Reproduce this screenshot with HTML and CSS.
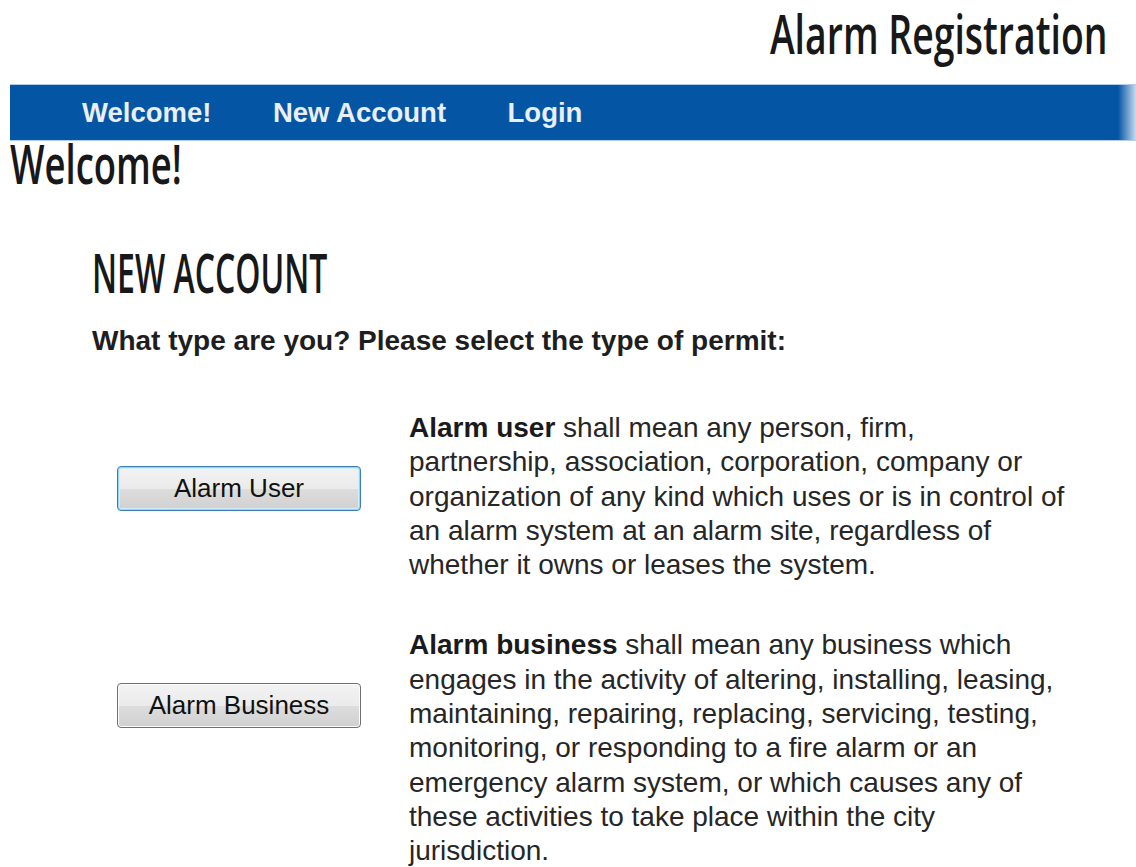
FILE: index.html
```html
<!DOCTYPE html>
<html lang="en">
<head>
<meta charset="utf-8">
<title>Alarm Registration</title>
<link rel="stylesheet" href="styles.css">
</head>
<body>
<div class="page">
  <header class="masthead">
    <div class="site-title"><span>Alarm Registration</span></div>
  </header>

  <nav class="mainnav">
    <a href="#" class="mainnav-link">Welcome!</a>
    <a href="#" class="mainnav-link">New Account</a>
    <a href="#" class="mainnav-link">Login</a>
  </nav>

  <h1 class="page-title"><span>Welcome!</span></h1>

  <section class="account">
    <h2 class="section-title"><span>NEW ACCOUNT</span></h2>
    <p class="prompt">What type are you? Please select the type of permit:</p>

    <div class="permit-row permit-row-user">
      <div class="permit-action">
        <button type="button" class="permit-btn is-focused">Alarm User</button>
      </div>
      <p class="permit-desc"><strong>Alarm user</strong> shall mean any person, firm, partnership, association, corporation, company or organization of any kind which uses or is in control of an alarm system at an alarm site, regardless of whether it owns or leases the system.</p>
    </div>

    <div class="permit-row permit-row-business">
      <div class="permit-action">
        <button type="button" class="permit-btn">Alarm Business</button>
      </div>
      <p class="permit-desc"><strong>Alarm business</strong> shall mean any business which engages in the activity of altering, installing, leasing, maintaining, repairing, replacing, servicing, testing, monitoring, or responding to a fire alarm or an emergency alarm system, or which causes any of these activities to take place within the city jurisdiction.</p>
    </div>
  </section>
</div>
</body>
</html>
```

FILE: styles.css
```css
html, body {
  margin: 0;
  padding: 0;
  background: #ffffff;
}

body {
  font-family: "Liberation Sans", Arial, sans-serif;
  color: #222222;
  overflow: hidden;
}

.page {
  padding-left: 10px;
}

/* ---- masthead ---- */
.masthead {
  height: 84px;
  box-sizing: border-box;
  padding: 11px 28px 0 0;
  display: flex;
  justify-content: flex-end;
}

.site-title,
.page-title,
.section-title {
  font-family: "Open Sans", "Liberation Sans", sans-serif;
  font-weight: 600;
  font-size: 55px;
  line-height: 44px;
  color: #181818;
  margin: 0;
  white-space: nowrap;
}

.site-title span,
.page-title span,
.section-title span {
  display: inline-block;
}

.site-title span {
  transform: scaleX(0.68);
  transform-origin: right center;
}

.page-title span {
  transform: scaleX(0.663);
  transform-origin: left center;
}

.section-title span {
  transform: scaleX(0.582);
  transform-origin: left center;
}

/* ---- main navigation bar ---- */
.mainnav {
  height: 55px;
  border-top: 1px solid #b3cce8;
  border-bottom: 1px solid #b3cce8;
  background: linear-gradient(to right, #0455a4 0, #0455a4 calc(100% - 18px), #c9dbef 100%);
  display: flex;
  align-items: center;
  gap: 61.5px;
  padding-left: 72px;
}

.mainnav-link {
  font-weight: 700;
  font-size: 27.5px;
  line-height: 55px;
  color: #eaeff5;
  text-decoration: none;
}

/* ---- content ---- */
.page-title {
  margin: 0;
}

.account {
  margin-left: 82px;
}

.section-title {
  margin-top: 65px;
}

.prompt {
  margin: 30px 0 0;
  font-weight: 700;
  font-size: 28px;
  line-height: 34px;
  color: #1e1e1e;
}

.permit-row {
  display: grid;
  grid-template-columns: 317px 659px;
  align-items: start;
}

.permit-row-user {
  margin-top: 53px;
}

.permit-row-business {
  margin-top: 46px;
}

.permit-action {
  padding: 55px 0 0 25px;
}

.permit-desc {
  margin: 0;
  font-size: 28px;
  line-height: 34.3px;
  color: #262626;
}

.permit-desc strong {
  color: #1a1a1a;
}

/* ---- buttons ---- */
.permit-btn {
  width: 244px;
  height: 45px;
  margin: 0;
  padding: 0;
  font-family: "Liberation Sans", Arial, sans-serif;
  font-size: 26px;
  color: #111111;
  border: 1px solid #707070;
  border-radius: 4px;
  background: linear-gradient(to bottom, #f3f3f3 0%, #ebebeb 50%, #dddddd 51%, #d0d0d0 100%);
  box-shadow: inset 0 0 0 1px #fbfbfb;
  cursor: pointer;
}

.permit-btn.is-focused {
  border-color: #3c7fb1;
  box-shadow: inset 0 0 0 1px #8fd6f7, inset 0 0 0 2px #d2edfb;
}
```
